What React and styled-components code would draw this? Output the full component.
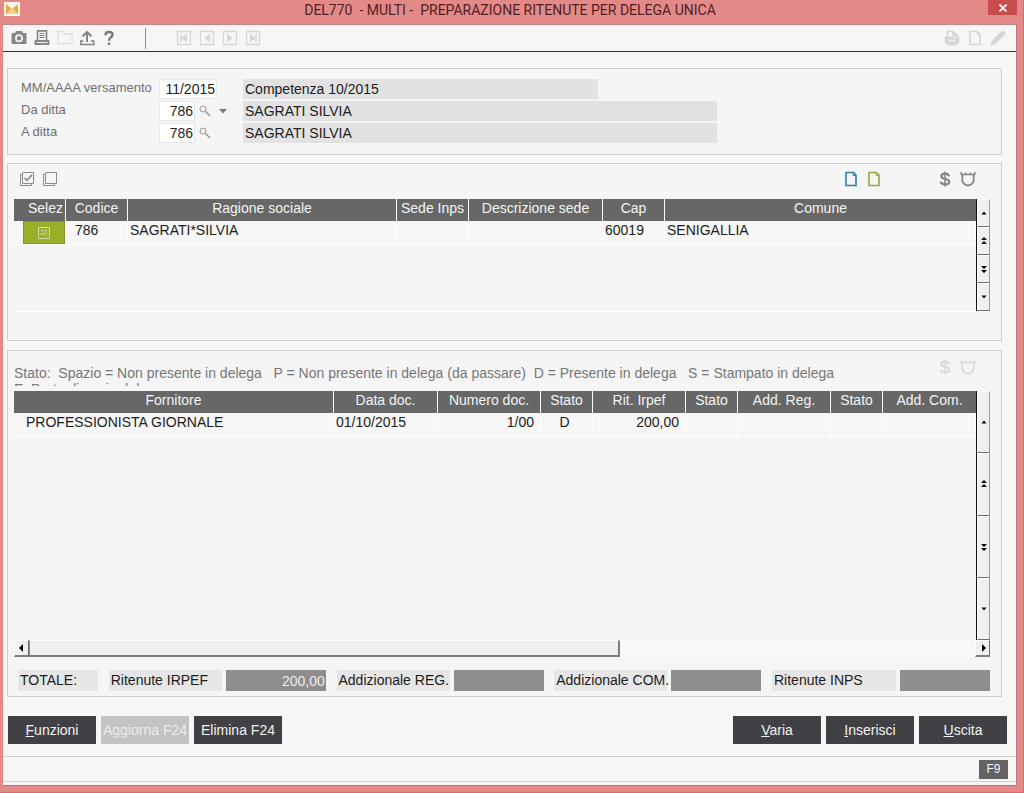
import React, { useState } from 'react'
import styled, { createGlobalStyle } from 'styled-components'

const companyColumns = [
    { title: 'Selez', width: 52, align: 'right' },
    { title: 'Codice', width: 62 },
    { title: 'Ragione sociale', width: 269 },
    { title: 'Sede Inps', width: 72 },
    { title: 'Descrizione sede', width: 134 },
    { title: 'Cap', width: 62 },
    { title: 'Comune' }
];

const supplierColumns = [
    { title: 'Fornitore' },
    { title: 'Data doc.', width: 104 },
    { title: 'Numero doc.', width: 103 },
    { title: 'Stato', width: 52 },
    { title: 'Rit. Irpef', width: 93 },
    { title: 'Stato', width: 52 },
    { title: 'Add. Reg.', width: 93 },
    { title: 'Stato', width: 52 },
    { title: 'Add. Com.', width: 93 }
];

const totals = [
    { id: 'irpef', title: 'Ritenute IRPEF', value: '200,00', labelWidth: 113, width: 100 },
    { id: 'reg', title: 'Addizionale REG.', value: '', labelWidth: 113, width: 90 },
    { id: 'com', title: 'Addizionale COM.', value: '', labelWidth: 113, width: 90 },
    { id: 'inps', title: 'Ritenute INPS', value: '', labelWidth: 124, width: 90 }
];

const CameraIcon = () => (
    <svg width="16" height="16" viewBox="0 0 16 16">
        <path fill="#858585" fillRule="evenodd" d="M1.500 3H4l1-2h6l1 2h2.500a1 1 0 0 1 1 1v9a1 1 0 0 1-1 1h-13a1 1 0 0 1-1-1V4a1 1 0 0 1 1-1zM8 4.300a4 4 0 1 0 0 8 4 4 0 0 0 0-8zm0 1.700a2.300 2.300 0 1 1 0 4.600A2.300 2.300 0 0 1 8 6z" />
    </svg>
)

const PrinterIcon = () => (
    <svg width="16" height="16" viewBox="0 0 16 16" fill="none" stroke="#858585">
        <path strokeWidth="1.600" d="M3.500 10V.9h9V10" />
        <path d="M5.500 3.500h5M5.500 5.500h5M5.500 7.500h5" />
        <path fill="#858585" d="M1 10.500h14v4H1z" />
        <path stroke="#f5f5f5" d="M2.500 12.500h11" />
    </svg>
)

const FolderIcon = () => (
    <svg width="16" height="16" viewBox="0 0 16 16" fill="none" stroke="#dedede" strokeWidth="1.300">
        <path d="M1 13.500v-12h5l1.500 2.500H15v9.500z" />
    </svg>
)

const UploadIcon = () => (
    <svg width="16" height="16" viewBox="0 0 16 16" fill="none" stroke="#858585" strokeWidth="2">
        <path d="M7 12V2M2.500 6.500 7 2l4.500 4.500" />
        <path strokeWidth="1.500" d="M3.500 11H.8v3.500h13V11h-3" />
    </svg>
)

const HelpIcon = () => (
    <svg width="16" height="16" viewBox="0 0 16 16" fill="none" stroke="#7c7c7c" strokeWidth="2.500">
        <path d="M2.500 5.200C2.500 2.800 4 2 6 2s3.600 1 3.600 2.800C9.600 7.300 6 7 6 10.800" />
        <path d="M6 12.500V15" />
    </svg>
)

const NavIcon = ({ direction, edge }) => (
    <svg width="16" height="16" viewBox="0 0 16 16" fill="none" stroke="#d6d6d6">
        <path strokeWidth="1.300" d="M1.500 1.500h13v13h-13z" />
        <g transform={direction === 'left' ? undefined : 'matrix(-1 0 0 1 16 0)'}>
            <path fill="#d6d6d6" d="M10.500 4.500v7L6 8z" />
            {edge && <path strokeWidth="1.500" d="M5 4v8" />}
        </g>
    </svg>
)

const FaxIcon = () => (
    <svg width="16" height="16" viewBox="0 0 16 16" fill="none" stroke="#d4d4d4" strokeWidth="1.500">
        <path d="M3.500 7V1.500h6L13 5v2" />
        <path d="M9 1.500V5h4" />
        <path fill="#dadada" d="M1.500 7.500h13v4.500l-2.500 2.500h-8L1.500 12z" />
        <path stroke="#f5f5f5" strokeWidth="1" d="M4.500 10.500h7M10 8h3" />
    </svg>
)

const PencilIcon = () => (
    <svg width="16" height="16" viewBox="0 0 16 16" fill="#d6d6d6">
        <path d="m.5 15.500 1.200-4.700L11 1.500a2.400 2.400 0 0 1 3.500 3.500L5.200 14.300z" />
    </svg>
)

const PageIcon = ({ color }) => (
    <svg width="14" height="16" viewBox="0 0 14 16" fill="none" stroke={color} strokeWidth="1.600">
        <path d="M2 1.500h7.500L12 4v10.500H2z" />
        <path strokeWidth="1" d="M9 1.500v3H12" />
    </svg>
)

const StackIcon = ({ checked }) => (
    <svg width="16" height="16" viewBox="0 0 16 16" fill="none" stroke="#8a8a8a">
        <path d="M3.500 1.500h11v11h-11z" />
        <path d="M3.500 3.500h-2v11h11v-2" />
        {checked && <path strokeWidth="1.500" d="m5.500 6.700 2.500 2.600 5-5.600" />}
    </svg>
)

const DollarIcon = ({ color }) => (
    <svg width="16" height="16" viewBox="0 0 16 16" fill="none" stroke={color} strokeWidth="2.200">
        <path d="M12 5.200C11.500 3.500 10 2.700 8 2.700 5.700 2.700 4.300 3.800 4.300 5.300 4.300 9 12.300 6.900 12.300 10.700c0 1.600-1.700 2.600-4.200 2.600-2.500 0-4.200-1-4.500-2.700" />
        <path strokeWidth="1.500" d="M8 .5v15" />
    </svg>
)

const ShieldIcon = ({ color }) => (
    <svg width="16" height="16" viewBox="0 0 16 16" fill="none" stroke={color} strokeWidth="1.800">
        <path d="M2.300 3.500v5.500c0 3 3 5 5.700 5.700 2.700-.7 5.700-2.700 5.700-5.700V3.500" />
        <path strokeWidth="1.500" d="M1.200 1v2.500h13.600V1M5.500 1.500v2M10.500 1.500v2" />
    </svg>
)

const SearchIcon = () => (
    <svg width="12" height="12" viewBox="0 0 12 12" fill="none" stroke="#9a9a9a">
        <circle cx="4" cy="4" r="3" />
        <path strokeWidth="1.600" d="m6.300 6.300 4.700 4.700" />
    </svg>
)

const EditIcon = () => (
    <svg width="12" height="12" viewBox="0 0 12 12" fill="none" stroke="#d3dca6">
        <path d="M.5.500h11v11H.5z" />
        <path d="m2.500 6 1.500 2 5-5M3 3.500h3M6 9l3.500-3.500" />
    </svg>
)

const Arrow = ({ direction, double }) => {
    const turn = { up: 0, right: 90, down: 180, left: 270 }[direction];

    return (
        <svg width="10" height="10" viewBox="0 0 10 10" fill="#000">
            <g transform={`rotate(${turn} 5 5)`}>
                {double
                    ? <path d="M5 1l3 3H2zM5 5l3 3H2z" />
                    : <path d={direction === 'left' || direction === 'right' ? 'M5 2l4 4H1z' : 'M5 3.500l2.500 3h-5z'} />}
            </g>
        </svg>
    )
}

const Grid = ({ columns, children }) => (
    <Table>
        <colgroup>
            {columns.map((column, index) => <Col key={index} $width={column.width} />)}
        </colgroup>
        <thead>
            <tr>
                {columns.map((column, index) => (
                    <HeadCell key={index} scope="col" $align={column.align}>{column.title}</HeadCell>
                ))}
            </tr>
        </thead>
        <tbody>{children}</tbody>
    </Table>
)

const VerticalScroll = () => (
    <ScrollColumn>
        <ScrollButton type="button" aria-label="Riga precedente"><Arrow direction="up" /></ScrollButton>
        <ScrollButton type="button" aria-label="Pagina precedente"><Arrow direction="up" double /></ScrollButton>
        <ScrollButton type="button" aria-label="Pagina successiva"><Arrow direction="down" double /></ScrollButton>
        <ScrollButton type="button" aria-label="Riga successiva"><Arrow direction="down" /></ScrollButton>
    </ScrollColumn>
)

const App = () => {
    const [form, setForm] = useState({ period: '11/2015', from: '786', to: '786' });
    const [selected, setSelected] = useState(true);

    const onChange = event => {
        const { name, value } = event.target;

        setForm({
            ...form,
            [name]: value
        });
    }

    return (
        <Window>
            <GlobalStyle />
            <TitleBar>
                <AppLogo>
                    <svg width="14" height="14" viewBox="0 0 14 14">
                        <path fill="#e9a944" d="M1 2l6 5 6-5v10H1z" />
                        <path fill="#f6d28b" d="M1 12l6-6 6 6z" />
                    </svg>
                </AppLogo>
                <Title>{'DEL770  - MULTI -  PREPARAZIONE RITENUTE PER DELEGA UNICA'}</Title>
                <CloseButton type="button" aria-label="Chiudi">
                    <svg width="8" height="8" viewBox="0 0 8 8" stroke="#fff" strokeWidth="1.800">
                        <path d="M.5.5l7 7M7.500.5l-7 7" />
                    </svg>
                </CloseButton>
            </TitleBar>
            <Content>
                <Toolbar>
                    <ToolGroup $width={134}>
                        <IconButton type="button" aria-label="Cattura"><CameraIcon /></IconButton>
                        <IconButton type="button" aria-label="Stampa"><PrinterIcon /></IconButton>
                        <IconButton type="button" aria-label="Apri" disabled><FolderIcon /></IconButton>
                        <IconButton type="button" aria-label="Esporta"><UploadIcon /></IconButton>
                        <IconButton type="button" aria-label="Aiuto"><HelpIcon /></IconButton>
                    </ToolGroup>
                    <Divider />
                    <ToolGroup>
                        <IconButton type="button" aria-label="Primo" disabled><NavIcon direction="left" edge /></IconButton>
                        <IconButton type="button" aria-label="Precedente" disabled><NavIcon direction="left" /></IconButton>
                        <IconButton type="button" aria-label="Successivo" disabled><NavIcon direction="right" /></IconButton>
                        <IconButton type="button" aria-label="Ultimo" disabled><NavIcon direction="right" edge /></IconButton>
                    </ToolGroup>
                    <ToolGroup $end>
                        <IconButton type="button" aria-label="Fax" disabled><FaxIcon /></IconButton>
                        <IconButton type="button" aria-label="Nuovo" disabled><PageIcon color="#d6d6d6" /></IconButton>
                        <IconButton type="button" aria-label="Modifica" disabled><PencilIcon /></IconButton>
                    </ToolGroup>
                </Toolbar>

                <Main>
                    <FilterPanel>
                        <FieldLabel htmlFor="period">MM/AAAA versamento</FieldLabel>
                        <FieldGroup>
                            <Field id="period" name="period" value={form.period} onChange={onChange} $width={58} />
                        </FieldGroup>
                        <Description $width={355}>Competenza 10/2015</Description>

                        <FieldLabel htmlFor="from">Da ditta</FieldLabel>
                        <FieldGroup>
                            <Field id="from" name="from" value={form.from} onChange={onChange} $width={36} />
                            <LookupButton type="button" aria-label="Cerca da ditta"><SearchIcon /></LookupButton>
                            <LookupButton type="button" aria-label="Elenco ditte">
                                <svg width="8" height="5" viewBox="0 0 8 5"><path fill="#7a7a7a" d="M0 0h8L4 4.500z" /></svg>
                            </LookupButton>
                        </FieldGroup>
                        <Description $width={474}>SAGRATI SILVIA</Description>

                        <FieldLabel htmlFor="to">A ditta</FieldLabel>
                        <FieldGroup>
                            <Field id="to" name="to" value={form.to} onChange={onChange} $width={36} />
                            <LookupButton type="button" aria-label="Cerca a ditta"><SearchIcon /></LookupButton>
                        </FieldGroup>
                        <Description $width={474}>SAGRATI SILVIA</Description>
                    </FilterPanel>

                    <CompanyPanel>
                        <PanelTools>
                            <ToolGroup>
                                <IconButton type="button" aria-label="Seleziona tutto"><StackIcon checked /></IconButton>
                                <IconButton type="button" aria-label="Deseleziona tutto"><StackIcon /></IconButton>
                            </ToolGroup>
                            <ToolGroup $end>
                                <IconButton type="button" aria-label="Documento blu"><PageIcon color="#2f7fba" /></IconButton>
                                <IconButton type="button" aria-label="Documento verde"><PageIcon color="#94ab45" /></IconButton>
                            </ToolGroup>
                            <ToolGroup>
                                <IconButton type="button" aria-label="Importi"><DollarIcon color="#858585" /></IconButton>
                                <IconButton type="button" aria-label="Protezione"><ShieldIcon color="#858585" /></IconButton>
                            </ToolGroup>
                        </PanelTools>
                        <GridArea>
                            <Grid columns={companyColumns}>
                                <tr>
                                    <CheckCell>
                                        <CheckBox>
                                            <input type="checkbox" aria-label="Seleziona 786" checked={selected} onChange={() => setSelected(!selected)} />
                                            {selected && <EditIcon />}
                                        </CheckBox>
                                    </CheckCell>
                                    <Cell $indent={9}>786</Cell>
                                    <Cell>SAGRATI*SILVIA</Cell>
                                    <Cell />
                                    <Cell />
                                    <Cell>60019</Cell>
                                    <Cell>SENIGALLIA</Cell>
                                </tr>
                            </Grid>
                            <VerticalScroll />
                        </GridArea>
                    </CompanyPanel>

                    <DetailPanel>
                        <LegendBar>
                            <Legend>
                                <p>{'Stato:  Spazio = Non presente in delega   P = Non presente in delega (da passare)  D = Presente in delega   S = Stampato in delega'}</p>
                                <p>E: Parte di es. in delega</p>
                            </Legend>
                            <ToolGroup $end>
                                <IconButton type="button" aria-label="Importi" disabled><DollarIcon color="#dadada" /></IconButton>
                                <IconButton type="button" aria-label="Protezione" disabled><ShieldIcon color="#dadada" /></IconButton>
                            </ToolGroup>
                        </LegendBar>
                        <GridArea $grow>
                            <Grid columns={supplierColumns}>
                                <tr>
                                    <Cell $indent={12}>PROFESSIONISTA GIORNALE</Cell>
                                    <Cell>01/10/2015</Cell>
                                    <Cell $align="right">1/00</Cell>
                                    <Cell $align="center">D</Cell>
                                    <Cell $align="right">200,00</Cell>
                                    <Cell />
                                    <Cell />
                                    <Cell />
                                    <Cell />
                                </tr>
                            </Grid>
                            <VerticalScroll />
                        </GridArea>
                        <ScrollRow>
                            <ScrollEnd type="button" aria-label="Scorri a sinistra"><Arrow direction="left" /></ScrollEnd>
                            <ScrollTrack><ScrollThumb /></ScrollTrack>
                            <ScrollEnd type="button" aria-label="Scorri a destra"><Arrow direction="right" /></ScrollEnd>
                        </ScrollRow>
                        <Totals>
                            <TotalLabel as="span" $width={80}>TOTALE:</TotalLabel>
                            {totals.map(total => (
                                <TotalPair key={total.id}>
                                    <TotalLabel htmlFor={total.id} $width={total.labelWidth}>{total.title}</TotalLabel>
                                    <TotalValue id={total.id} value={total.value} readOnly $width={total.width} />
                                </TotalPair>
                            ))}
                        </Totals>
                    </DetailPanel>
                </Main>

                <Actions>
                    <ActionButton type="button"><u>F</u>unzioni</ActionButton>
                    <ActionButton type="button" disabled>Aggiorna F24</ActionButton>
                    <ActionButton type="button">Elimina F24</ActionButton>
                    <Spacer />
                    <ActionButton type="button"><u>V</u>aria</ActionButton>
                    <ActionButton type="button"><u>I</u>nserisci</ActionButton>
                    <ActionButton type="button"><u>U</u>scita</ActionButton>
                </Actions>
                <StatusBar>
                    <KeyButton type="button">F9</KeyButton>
                </StatusBar>
            </Content>
        </Window>
    )
}

const GlobalStyle = createGlobalStyle`
    * {
        box-sizing: border-box;
    }
    body {
        margin: 0;
        font-family: "Liberation Sans", Arial, sans-serif;
        font-size: 14px;
        color: #1c1c1c;
    }
    p {
        margin: 0;
    }
    button, input {
        font: inherit;
        color: inherit;
        margin: 0;
        padding: 0;
        border: 0;
        border-radius: 0;
    }
    svg {
        display: block;
    }
`;

const Window = styled.div`
    display: flex;
    flex-direction: column;
    min-height: 100vh;
    padding: 0 6px 6px 3px;
    background: #e38a89;
    border-right: 1px solid #cf6d70;
    border-bottom: 1px solid #cf6d70;
`;

const TitleBar = styled.header`
    display: flex;
    align-items: flex-start;
    height: 24px;
`;

const AppLogo = styled.span`
    display: flex;
    margin: 2px 0 0 1px;
    width: 16px;
    height: 14px;
    justify-content: center;
    background: #fdf6e8;
`;

const Title = styled.h1`
    flex: 1;
    margin: 0;
    padding-left: 12px;
    font-family: Roboto, "Open Sans", sans-serif;
    font-size: 14px;
    font-weight: 400;
    line-height: 20px;
    text-align: center;
    white-space: pre;
    color: #54201f;
`;

const CloseButton = styled.button`
    display: flex;
    align-items: center;
    justify-content: center;
    width: 29px;
    height: 15px;
    background: #c84c4e;
`;

const Content = styled.div`
    flex: 1;
    display: flex;
    flex-direction: column;
    background: #f6f6f6;
    border-top: 1px solid #b98a8a;
    border-right: 1px solid #b97c7c;
    border-bottom: 1px solid #b07474;
`;

const Toolbar = styled.div`
    display: flex;
    align-items: center;
    height: 27px;
    padding: 0 10px 0 8px;
    border-bottom: 1px solid #2e2e2e;
`;

const ToolGroup = styled.div`
    display: flex;
    align-items: center;
    gap: 7px;
    width: ${props => props.$width ? `${props.$width}px` : 'auto'};
    margin-left: ${props => props.$end ? 'auto' : 0};
`;

const Divider = styled.span`
    width: 1px;
    height: 21px;
    margin-right: 30px;
    background: #8f8f8f;
`;

const IconButton = styled.button`
    display: flex;
    justify-content: center;
    width: 16px;
    background: none;
`;

const Main = styled.main`
    flex: 1;
    display: flex;
    flex-direction: column;
    padding: 16px 14px 0 4px;
`;

const Panel = styled.section`
    background: #f5f5f5;
    border: 1px solid #cbcfcf;
`;

const FilterPanel = styled(Panel)`
    display: grid;
    grid-template-columns: 138px 84px 1fr;
    grid-auto-rows: 20px;
    row-gap: 2px;
    padding: 10px 14px 11px 13px;
`;

const FieldLabel = styled.label`
    font-size: 13px;
    line-height: 17px;
    white-space: nowrap;
    color: #707070;
`;

const FieldGroup = styled.div`
    display: flex;
    align-items: center;
    gap: 4px;
`;

const Field = styled.input`
    width: ${props => props.$width}px;
    height: 20px;
    padding-right: 1px;
    text-align: right;
    background: #fff;
    border: 1px solid #e8e8e8;
    outline: none;
`;

const LookupButton = styled.button`
    display: flex;
    width: 12px;
    justify-content: center;
    background: none;
    & + & {
        margin-left: 2px;
    }
`;

const Description = styled.p`
    max-width: ${props => props.$width}px;
    padding-left: 2px;
    line-height: 20px;
    background: #e2e2e2;
`;

const CompanyPanel = styled(Panel)`
    margin-top: 8px;
    padding: 0 11px 28px 6px;
`;

const PanelTools = styled.div`
    display: flex;
    align-items: center;
    gap: 55px;
    height: 35px;
    padding: 0 14px 5px 5px;
`;

const GridArea = styled.div`
    display: flex;
    align-items: flex-start;
    min-height: 113px;
    flex-grow: ${props => props.$grow ? 1 : 0};
    border-bottom: ${props => props.$grow ? 'none' : '1px solid #fff'};
`;

const Table = styled.table`
    flex: 1;
    width: 0;
    table-layout: fixed;
    border-collapse: separate;
    border-spacing: 0;
`;

const Col = styled.col`
    width: ${props => props.$width ? `${props.$width}px` : 'auto'};
`;

const HeadCell = styled.th`
    height: 22px;
    padding: 0 2px 3px;
    font-weight: 400;
    line-height: 19px;
    text-align: ${props => props.$align || 'center'};
    white-space: nowrap;
    color: #f4f4f4;
    background: #676767;
    border-right: 1px solid #fafafa;
    &:last-child {
        border-right: 0;
    }
`;

const Cell = styled.td`
    height: 24px;
    padding: 0 6px 4px ${props => props.$indent || 2}px;
    line-height: 19px;
    text-align: ${props => props.$align || 'left'};
    white-space: nowrap;
    background: #f7f7f7;
    border-right: 1px solid #fdfdfd;
    border-bottom: 1px solid #fdfdfd;
`;

const CheckCell = styled(Cell)`
    padding: 0 0 0 9px;
`;

const CheckBox = styled.label`
    display: grid;
    place-items: center;
    height: 23px;
    background: #9aae27;
    border: 1px solid #83912f;
    & > * {
        grid-area: 1 / 1;
    }
    & > input {
        appearance: none;
        width: 100%;
        height: 100%;
    }
`;

const ScrollColumn = styled.div`
    display: flex;
    flex-direction: column;
    align-self: stretch;
    width: 14px;
    border-left: 1px solid #111;
`;

const ScrollButton = styled.button`
    flex: 1;
    display: flex;
    align-items: center;
    justify-content: center;
    background: #f0f0f0;
    border: 1px solid #fff;
    border-right-color: #9a9a9a;
    border-bottom-color: #6e6e6e;
`;

const DetailPanel = styled(Panel)`
    flex: 1;
    display: flex;
    flex-direction: column;
    margin-top: 9px;
    padding: 0 11px 5px 6px;
`;

const LegendBar = styled.div`
    display: flex;
    align-items: flex-start;
    height: 40px;
    padding: 8px 14px 0 0;
`;

const Legend = styled.div`
    height: 21px;
    margin-top: 6px;
    overflow: hidden;
    line-height: 16px;
    white-space: pre;
    color: #767676;
`;

const ScrollRow = styled.div`
    display: flex;
    height: 17px;
`;

const ScrollEnd = styled.button`
    display: flex;
    align-items: center;
    justify-content: center;
    width: 15px;
    background: #f0f0f0;
    border: 1px solid #fff;
    border-right-color: #6e6e6e;
    border-bottom: 2px solid #7e7e7e;
`;

const ScrollTrack = styled.div`
    flex: 1;
    background: #f9f9f9;
`;

const ScrollThumb = styled.div`
    width: calc(100% * 5 / 8);
    height: 100%;
    background: #f0f0f0;
    border: 1px solid #fff;
    border-left-color: #8a8a8a;
    border-right: 2px solid #7e7e7e;
    border-bottom: 2px solid #7e7e7e;
`;

const Totals = styled.div`
    display: flex;
    justify-content: space-between;
    margin: 13px 0 0 4px;
`;

const TotalPair = styled.div`
    display: flex;
    gap: 4px;
`;

const TotalLabel = styled.label`
    width: ${props => props.$width}px;
    padding-left: 2px;
    line-height: 21px;
    white-space: nowrap;
    background: #e6e6e6;
`;

const TotalValue = styled.input`
    width: ${props => props.$width}px;
    height: 21px;
    padding-right: 1px;
    text-align: right;
    color: #ededed;
    background: #8e8e8e;
    outline: none;
`;

const Actions = styled.div`
    display: flex;
    gap: 5px;
    padding: 19px 9px 12px 5px;
`;

const Spacer = styled.span`
    flex: 1;
`;

const ActionButton = styled.button`
    width: 88px;
    height: 28px;
    white-space: nowrap;
    color: #f2f2f2;
    background: #414145;
    &:disabled {
        color: #ececec;
        background: #c3c3c3;
    }
`;

const StatusBar = styled.footer`
    display: flex;
    justify-content: flex-end;
    align-items: center;
    height: 26px;
    margin-bottom: 3px;
    padding-right: 8px;
    border-top: 1px solid #cfcfcf;
    border-bottom: 1px solid #cfcfcf;
`;

const KeyButton = styled.button`
    width: 29px;
    height: 19px;
    font-size: 12px;
    color: #f4f4f4;
    background: #636366;
`;

export default App;
